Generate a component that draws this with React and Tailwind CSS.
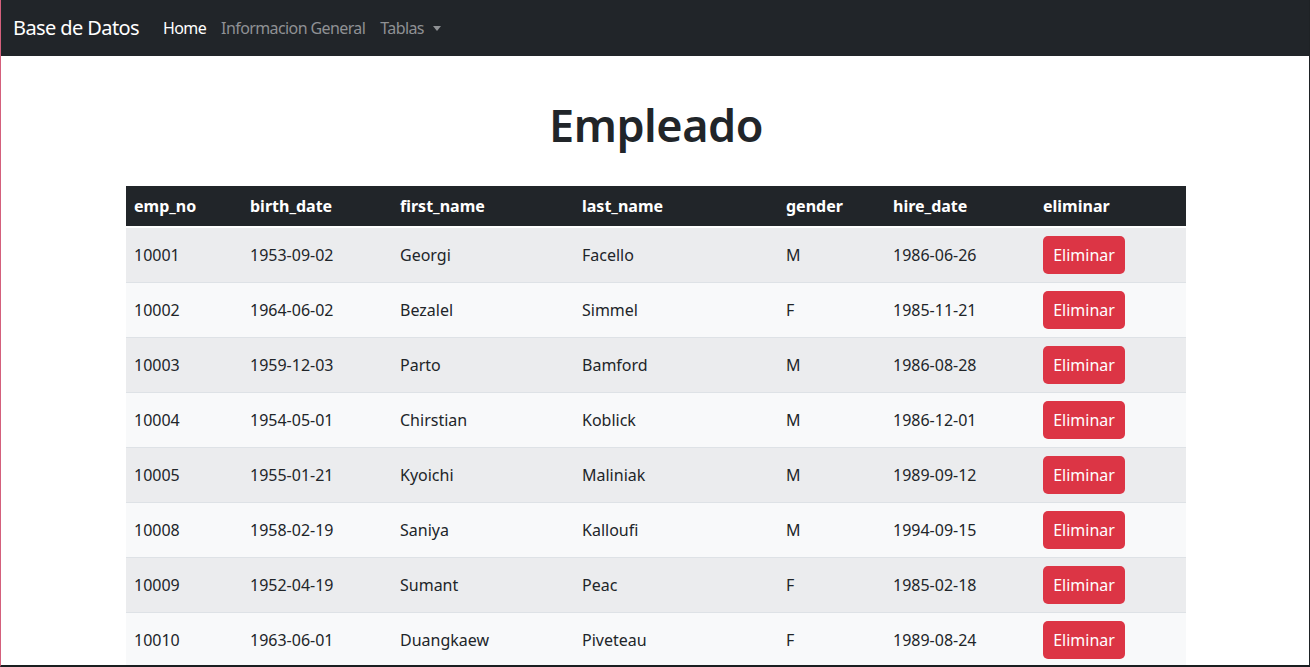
import React from 'react'

const empleados = [
  ['10001', '1953-09-02', 'Georgi', 'Facello', 'M', '1986-06-26'],
  ['10002', '1964-06-02', 'Bezalel', 'Simmel', 'F', '1985-11-21'],
  ['10003', '1959-12-03', 'Parto', 'Bamford', 'M', '1986-08-28'],
  ['10004', '1954-05-01', 'Chirstian', 'Koblick', 'M', '1986-12-01'],
  ['10005', '1955-01-21', 'Kyoichi', 'Maliniak', 'M', '1989-09-12'],
  ['10008', '1958-02-19', 'Saniya', 'Kalloufi', 'M', '1994-09-15'],
  ['10009', '1952-04-19', 'Sumant', 'Peac', 'F', '1985-02-18'],
  ['10010', '1963-06-01', 'Duangkaew', 'Piveteau', 'F', '1989-08-24'],
]

const columnas = ['emp_no', 'birth_date', 'first_name', 'last_name', 'gender', 'hire_date', 'eliminar']
const anchos = ['w-[116px]', 'w-[150px]', 'w-[182px]', 'w-[204px]', 'w-[107px]', 'w-[150px]', 'w-[151px]']

const Navbar = () => (
  <nav className="h-14 bg-[#212529] flex items-center pl-3">
    <span className="text-white text-[20px] tracking-[-0.6px] mr-[24px]">Base de Datos</span>
    <ul className="flex items-center gap-[15px] text-[16px] tracking-[-0.6px]">
      <li className="text-white">Home</li>
      <li className="text-[#8f9194]">Informacion General</li>
      <li className="text-[#8f9194] flex items-center">
        Tablas
        <span className="ml-[9px] inline-block w-0 h-0 border-x-[4.5px] border-x-transparent border-t-[5px] border-t-[#8f9194]"></span>
      </li>
    </ul>
  </nav>
)

export default function App() {
  return (
    <div
      className="h-[667px] overflow-hidden bg-white border-l border-l-[#d4607c] border-r border-r-[#1e2225] border-b-2 border-b-[#1a1e20] text-[#212529]"
      style={{ fontFamily: '"Noto Sans", "Open Sans", sans-serif' }}
    >
      <Navbar />
      <div className="w-[1060px] ml-[125px]">
        <h1 className="text-center text-[45px] font-semibold tracking-[-0.5px] leading-[54px] mt-[42px] mb-[34px]">Empleado</h1>
        <table className="w-full border-collapse text-[16px]">
          <thead>
            <tr className="bg-[#212529] text-white border-b-2 border-b-white">
              {columnas.map((c, i) => (
                <th key={c} className={`${anchos[i]} text-left font-bold px-2 h-[41px]`}>{c}</th>
              ))}
            </tr>
          </thead>
          <tbody>
            {empleados.map((e, r) => (
              <tr key={e[0]} className={`${r % 2 === 0 ? 'bg-[#ebecee]' : 'bg-[#f8f9fa]'} border-b border-b-[#dee2e6]`}>
                {e.map((v, i) => (
                  <td key={i} className="px-2 h-[55px] align-middle">{v}</td>
                ))}
                <td className="px-2 h-[55px] align-middle">
                  <button className="bg-[#dc3545] text-white rounded-[5px] h-[38px] w-[82px] text-[16px]">Eliminar</button>
                </td>
              </tr>
            ))}
          </tbody>
        </table>
      </div>
    </div>
  )
}
